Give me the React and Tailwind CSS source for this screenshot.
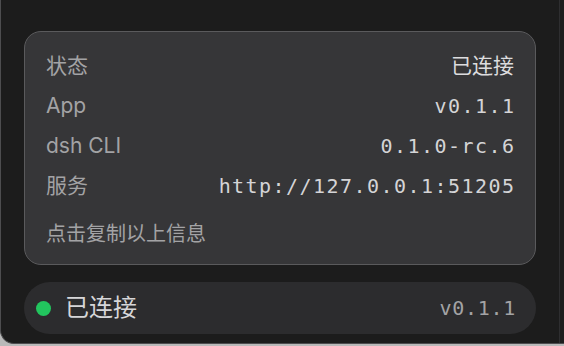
const sans = { fontFamily: 'Inter, "Noto Sans CJK SC", sans-serif' };

const rows = [
  { label: "状态", value: "已连接", cjk: true },
  { label: "App", value: "v0.1.1" },
  { label: "dsh CLI", value: "0.1.0-rc.6" },
  { label: "服务", value: "http://127.0.0.1:51205" },
];

const InfoRow = ({ label, value, cjk }) => {
  return (
    <div className="flex h-10 items-center justify-between">
      <span className="text-[21px] text-[#a3a3a5]">{label}</span>
      {cjk ? (
        <span className="text-[21px] text-[#dcdcde]">{value}</span>
      ) : (
        <span className="font-['DejaVu_Sans_Mono',monospace] text-[20px] tracking-[1.45px] text-[#d4d4d6] -mr-[1.45px]">
          {value}
        </span>
      )}
    </div>
  );
};

const App = () => {
  return (
    <div className="w-[564px] h-[346px] bg-[#b9b9b9] overflow-hidden" style={sans}>
      <div className="flex h-[344px] w-full rounded-bl-[14px] border-l border-b border-[#4d4d4f] bg-[#1c1c1c] overflow-hidden">
        <div className="flex flex-1 flex-col pl-[23px] pr-[23px] pt-[31px]">
          <div className="flex flex-col rounded-[17px] border border-[#5a5a5c] bg-[#363638] px-[21px] pt-[14px] pb-[20px]">
            {rows.map((r) => (
              <InfoRow key={r.label} {...r} />
            ))}
            <div className="mt-[18px] h-5 flex items-center text-[20px] text-[#a3a3a5]">
              点击复制以上信息
            </div>
          </div>
          <div className="mt-[17px] flex h-[52px] items-center justify-between rounded-full bg-[#2c2c2e] pl-3 pr-5">
            <div className="flex items-center gap-[14px]">
              <span className="size-[15px] rounded-full bg-[#22c55e]" />
              <span className="text-[24px] text-[#d6d6d8]">已连接</span>
            </div>
            <span className="font-['DejaVu_Sans_Mono',monospace] text-[20px] tracking-[0.7px] text-[#a3a3a5]">
              v0.1.1
            </span>
          </div>
        </div>
        <div className="w-[5px] border-l border-[#2e2e30] bg-[#1e1e1e]" />
      </div>
    </div>
  );
};

export default App;
